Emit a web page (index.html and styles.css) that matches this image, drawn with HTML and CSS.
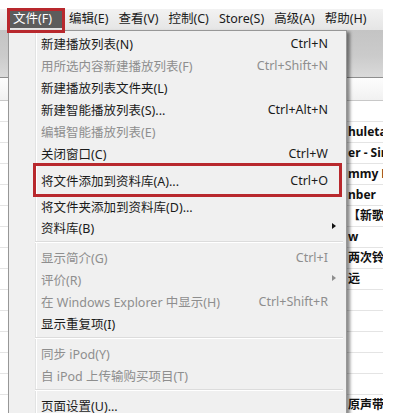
FILE: index.html
```html
<!DOCTYPE html>
<html lang="zh-CN">

<head>
    <meta charset="UTF-8">
    <meta name="viewport" content="width=device-width, initial-scale=1.0">
    <title>iTunes - 文件菜单</title>
    <link rel="stylesheet" href="styles.css">
</head>

<body>
    <div class="window">
        <!-- 菜单栏 -->
        <div class="menubar">
            <span class="menubar-item open">文件(F)<span class="mark"></span></span>
            <span class="menubar-item">编辑(E)</span>
            <span class="menubar-item">查看(V)</span>
            <span class="menubar-item">控制(C)</span>
            <span class="menubar-item">Store(S)</span>
            <span class="menubar-item">高级(A)</span>
            <span class="menubar-item">帮助(H)</span>
        </div>

        <div class="toolbar"></div>
        <div class="list-head"></div>

        <!-- 歌曲列表 (被菜单遮住大部分) -->
        <div class="list">
            <div class="row"><span class="cell"></span></div>
            <div class="row"><span class="cell">huleta</span></div>
            <div class="row"><span class="cell">er - Sin</span></div>
            <div class="row"><span class="cell">mmy N</span></div>
            <div class="row"><span class="cell">nber</span></div>
            <div class="row"><span class="cell">【新歌</span></div>
            <div class="row"><span class="cell">w</span></div>
            <div class="row"><span class="cell">两次铃</span></div>
            <div class="row"><span class="cell">远</span></div>
            <div class="row"><span class="cell"></span></div>
            <div class="row"><span class="cell"></span></div>
            <div class="row"><span class="cell"></span></div>
            <div class="row"><span class="cell"></span></div>
            <div class="row"><span class="cell"></span></div>
            <div class="row"><span class="cell">原声带</span></div>
        </div>

        <!-- 文件 下拉菜单 -->
        <div class="menu">
            <div class="item"><span class="label">新建播放列表(N)</span><span class="key">Ctrl+N</span><span class="sub"></span></div>
            <div class="item disabled"><span class="label">用所选内容新建播放列表(F)</span><span class="key">Ctrl+Shift+N</span><span class="sub"></span></div>
            <div class="item"><span class="label">新建播放列表文件夹(L)</span><span class="key"></span><span class="sub"></span></div>
            <div class="item"><span class="label">新建智能播放列表(S)...</span><span class="key">Ctrl+Alt+N</span><span class="sub"></span></div>
            <div class="item disabled"><span class="label">编辑智能播放列表(E)</span><span class="key"></span><span class="sub"></span></div>
            <div class="item"><span class="label">关闭窗口(C)</span><span class="key">Ctrl+W</span><span class="sub"></span></div>
            <div class="item marked"><span class="label">将文件添加到资料库(A)...</span><span class="key">Ctrl+O</span><span class="sub"></span></div>
            <div class="item short"><span class="label">将文件夹添加到资料库(D)...</span><span class="key"></span><span class="sub"></span></div>
            <div class="item"><span class="label">资料库(B)</span><span class="key"></span><span class="sub arrow"></span></div>
            <div class="sep"></div>
            <div class="item disabled"><span class="label">显示简介(G)</span><span class="key">Ctrl+I</span><span class="sub"></span></div>
            <div class="item disabled"><span class="label">评价(R)</span><span class="key"></span><span class="sub arrow"></span></div>
            <div class="item disabled"><span class="label">在 Windows Explorer 中显示(H)</span><span class="key">Ctrl+Shift+R</span><span class="sub"></span></div>
            <div class="item"><span class="label">显示重复项(I)</span><span class="key"></span><span class="sub"></span></div>
            <div class="sep"></div>
            <div class="item disabled"><span class="label">同步 iPod(Y)</span><span class="key"></span><span class="sub"></span></div>
            <div class="item disabled"><span class="label">自 iPod 上传输购买项目(T)</span><span class="key"></span><span class="sub"></span></div>
            <div class="sep"></div>
            <div class="item"><span class="label">页面设置(U)...</span><span class="key"></span><span class="sub"></span></div>
        </div>
    </div>
</body>

</html>
```

FILE: styles.css
```css
* {
    margin: 0;
    padding: 0;
    box-sizing: border-box;
}

html,
body {
    height: 100%;
    overflow: hidden;
}

body {
    background: #fff;
    font-family: 'Noto Sans', 'Noto Sans CJK SC', sans-serif;
    font-size: 12.5px;
    color: #1b1b1b;
}

.window {
    position: relative;
    width: 383px;
    margin-top: 9px;
}

/* 菜单栏 */
.menubar {
    display: flex;
    height: 21px;
    padding-left: 9px;
    background: linear-gradient(#f2f2f2, #e5e5e5);
}

.menubar-item {
    position: relative;
    flex-shrink: 0;
    height: 18px;
    margin-top: 1px;
    padding: 0 5px;
    line-height: 18px;
    white-space: nowrap;
}

.menubar-item.open {
    width: 53px;
    padding: 0 0 0 4px;
    margin-right: 2px;
    background: #5c5c5c;
    color: #fff;
}

.mark {
    position: absolute;
    left: -2px;
    top: -2px;
    right: -3px;
    bottom: -5px;
    border: 3px solid #b8282d;
    z-index: 5;
}

.toolbar {
    height: 48px;
    background: linear-gradient(#c4c4c4, #cbcbcb 55%, #dadada);
    border-bottom: 1px solid #8e8e8e;
}

.list-head {
    height: 23px;
    background: linear-gradient(#fdfdfd, #f1f1f1);
    border-bottom: 1px solid #c8c8c8;
}

.row {
    display: grid;
    grid-template-columns: 348px minmax(0, 1fr);
    height: 21px;
    overflow: hidden;
    border-bottom: 1px solid #e4e4e4;
    line-height: 20px;
    font-weight: bold;
    font-size: 12px;
    color: #111;
}

.cell {
    grid-column: 2;
    overflow: hidden;
    white-space: nowrap;
}

/* 下拉菜单 */
.menu {
    position: absolute;
    left: 8px;
    top: 21px;
    width: 339px;
    height: 400px;
    padding-top: 1px;
    border: 1px solid #979797;
    background:
        linear-gradient(to right, transparent 26px, #e2e3e3 26px, #e2e3e3 27px, #fff 27px, #fff 28px, transparent 28px),
        #f0f0f0;
    box-shadow: 3px 2px 3px rgba(0, 0, 0, 0.45);
    z-index: 2;
}

.item {
    position: relative;
    display: flex;
    align-items: center;
    height: 22px;
    padding-left: 32px;
    padding-right: 6px;
    white-space: nowrap;
}

.item.marked {
    height: 32px;
}

.item.short {
    height: 20px;
}

.item.disabled {
    color: #8e8e8e;
}

.label {
    flex: 1;
}

.key {
    text-align: right;
}

.sub {
    position: relative;
    width: 12px;
    height: 8px;
}

.arrow::after {
    content: '';
    position: absolute;
    left: 4px;
    top: 0;
    border-top: 3.5px solid transparent;
    border-bottom: 3.5px solid transparent;
    border-left: 4px solid #111;
}

.disabled .arrow::after {
    border-left-color: #8e8e8e;
}

.item.marked::after {
    content: '';
    position: absolute;
    left: 24px;
    right: 4px;
    top: -1px;
    bottom: -1px;
    border: 3px solid #b8282d;
}

.sep {
    height: 8px;
    margin: 0 3px 0 26px;
    background: linear-gradient(transparent 3px, #dcdcdc 3px, #dcdcdc 4px, #fff 4px, #fff 5px, transparent 5px);
}
```
